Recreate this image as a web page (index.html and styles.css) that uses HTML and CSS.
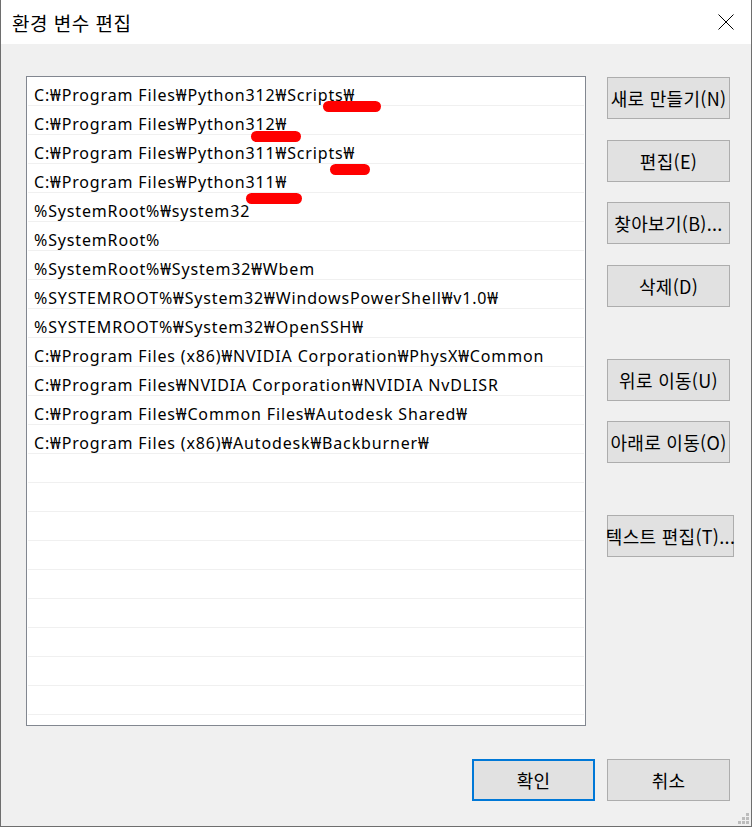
FILE: index.html
```html
<!DOCTYPE html>
<html lang="ko">
<head>
<meta charset="utf-8">
<title>환경 변수 편집</title>
<link rel="stylesheet" href="styles.css">
</head>
<body>
<div class="window">
  <div class="titlebar">
    <span class="title">환경 변수 편집</span>
    <svg class="close" width="16" height="16" viewBox="0 0 16 16"><path d="M0.5 0.5 L15.5 15.5 M15.5 0.5 L0.5 15.5" stroke="#000" stroke-width="1" fill="none"/></svg>
  </div>
  <div class="content">
    <div class="main">
      <div class="list">
        <div class="row">C:₩Program Files₩Python312₩Scripts₩</div>
        <div class="row">C:₩Program Files₩Python312₩</div>
        <div class="row">C:₩Program Files₩Python311₩Scripts₩</div>
        <div class="row">C:₩Program Files₩Python311₩</div>
        <div class="row">%SystemRoot%₩system32</div>
        <div class="row">%SystemRoot%</div>
        <div class="row">%SystemRoot%₩System32₩Wbem</div>
        <div class="row">%SYSTEMROOT%₩System32₩WindowsPowerShell₩v1.0₩</div>
        <div class="row">%SYSTEMROOT%₩System32₩OpenSSH₩</div>
        <div class="row">C:₩Program Files (x86)₩NVIDIA Corporation₩PhysX₩Common</div>
        <div class="row">C:₩Program Files₩NVIDIA Corporation₩NVIDIA NvDLISR</div>
        <div class="row">C:₩Program Files₩Common Files₩Autodesk Shared₩</div>
        <div class="row">C:₩Program Files (x86)₩Autodesk₩Backburner₩</div>
        <div class="row"></div>
        <div class="row"></div>
        <div class="row"></div>
        <div class="row"></div>
        <div class="row"></div>
        <div class="row"></div>
        <div class="row"></div>
        <div class="row"></div>
        <div class="row"></div>
      </div>
      <div class="side">
        <button class="btn">새로 만들기(N)</button>
        <button class="btn m21">편집(E)</button>
        <button class="btn m20">찾아보기(B)...</button>
        <button class="btn m21">삭제(D)</button>
        <button class="btn m52">위로 이동(U)</button>
        <button class="btn m20">아래로 이동(O)</button>
        <button class="btn m52 wide">텍스트 편집(T)...</button>
      </div>
    </div>
    <div class="footer">
      <button class="btn primary">확인</button>
      <button class="btn">취소</button>
    </div>
    <div class="grip">
      <span class="dot d1"></span>
      <span class="dot d2"></span><span class="dot d3"></span>
      <span class="dot d4"></span><span class="dot d5"></span><span class="dot d6"></span>
    </div>
  </div>
  <span class="mark mk1"></span>
  <span class="mark mk2"></span>
  <span class="mark mk3"></span>
  <span class="mark mk4"></span>
</div>
</body>
</html>
```
FILE: styles.css
```css
html, body {
  margin: 0;
  padding: 0;
  background: #f0f0f0;
}
.window {
  position: relative;
  width: 752px;
  height: 827px;
  box-sizing: border-box;
  border: 1px solid #6e6e6e;
  border-top: none;
  display: flex;
  flex-direction: column;
  background: #f0f0f0;
  overflow: hidden;
}
.titlebar {
  height: 44px;
  flex: none;
  background: #ffffff;
  display: flex;
  align-items: center;
  padding-left: 11px;
  padding-right: 17px;
}
.title {
  font-family: "Noto Sans CJK KR", sans-serif;
  font-size: 19px;
  letter-spacing: 0.5px;
  color: #000;
  flex: 1;
  padding-top: 1px;
}
.close {
  display: block;
}
.content {
  position: relative;
  flex: 1;
  display: flex;
  flex-direction: column;
  padding: 32px 21px 0 25px;
}
.main {
  display: flex;
  align-items: flex-start;
  gap: 21px;
}
.list {
  flex: none;
  width: 560px;
  height: 650px;
  box-sizing: border-box;
  border: 1px solid #828790;
  background: #ffffff;
  padding: 0 1px;
  overflow: hidden;
}
.row {
  height: 20px;
  padding-top: 8px;
  border-bottom: 1px solid #f0f0f0;
  line-height: 21px;
  font-family: "Noto Sans", "Noto Sans CJK KR", sans-serif;
  font-size: 16px;
  letter-spacing: 0.85px;
  color: #000;
  padding-left: 6px;
  white-space: nowrap;
}
.side {
  flex: none;
  width: 123px;
  display: flex;
  flex-direction: column;
  padding-top: 1px;
}
.btn {
  flex: none;
  width: 123px;
  height: 42px;
  box-sizing: border-box;
  border: 1px solid #adadad;
  background: #e1e1e1;
  font-family: "Noto Sans CJK KR", sans-serif;
  font-size: 18px;
  letter-spacing: 0.3px;
  color: #000;
  padding: 0;
  margin: 0;
  white-space: nowrap;
  display: flex;
  align-items: center;
  justify-content: center;
}
.btn.wide { width: 127px; }
.m20 { margin-top: 20px; }
.m21 { margin-top: 21px; }
.m52 { margin-top: 52px; }
.footer {
  display: flex;
  justify-content: flex-end;
  gap: 12px;
  margin-top: 33px;
}
.btn.primary {
  border: 2px solid #0078d7;
}
.grip {
  position: absolute;
  right: 2px;
  bottom: 2px;
  width: 11px;
  height: 11px;
}
.dot {
  position: absolute;
  width: 3px;
  height: 3px;
  background: #bcbcbc;
}
.d1 { right: 0; top: 0; }
.d2 { right: 4px; top: 4px; }
.d3 { right: 0; top: 4px; }
.d4 { right: 8px; top: 8px; }
.d5 { right: 4px; top: 8px; }
.d6 { right: 0; top: 8px; }
.mark {
  position: absolute;
  height: 11px;
  border-radius: 6px;
  background: #ff0000;
}
.mk1 { left: 322px; top: 101px; width: 58px; }
.mk2 { left: 250px; top: 131px; width: 50px; }
.mk3 { left: 329px; top: 164px; width: 40px; }
.mk4 { left: 245px; top: 193px; width: 56px; }
```
